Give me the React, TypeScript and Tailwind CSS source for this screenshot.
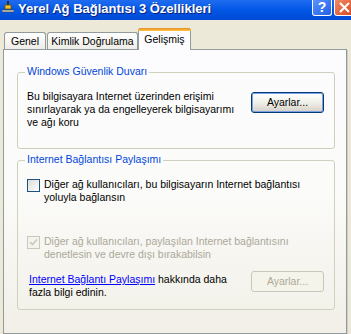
const XpButton = ({ label, disabled }: { label: string; disabled?: boolean }) => {
  if (disabled) {
    return (
      <div className="flex h-[21px] w-[73px] shrink-0 items-center justify-center rounded-[3px] border border-[#c9c7ba] bg-[#f5f4ea] text-[#aca899]">
        {label}
      </div>
    );
  }
  return (
    <div className="flex h-[21px] w-[73px] shrink-0 items-center justify-center rounded-[3px] border border-[#003c74] bg-gradient-to-b from-[#ffffff] via-[#f0f0ea] to-[#d6d0c5] text-black shadow-[inset_0_0_0_1px_#7ba0e4]">
      {label}
    </div>
  );
};

const GroupBox = ({ title, children, className }: { title: string; children: React.ReactNode; className?: string }) => (
  <div className={`relative rounded-[3px] border border-[#d0d0bf] ${className ?? ''}`}>
    <span className="absolute -top-[8px] left-[7px] bg-[#fcfcfe] px-[2px] leading-[13px] text-[#0046d5]">
      {title}
    </span>
    {children}
  </div>
);

const Checkbox = ({ checked, disabled }: { checked?: boolean; disabled?: boolean }) => (
  <div
    className={`flex h-[13px] w-[13px] shrink-0 items-center justify-center border ${
      disabled ? 'border-[#cac8bb] bg-[#f4f3ee]' : 'border-[#1c5180] bg-gradient-to-br from-[#dcdcd7] to-[#ffffff]'
    }`}
  >
    {checked && (
      <svg width="9" height="9" viewBox="0 0 9 9">
        <path d="M1 4 L3.5 6.5 L8 1.5" fill="none" stroke={disabled ? '#cac8bb' : '#21a121'} strokeWidth="1.6" />
      </svg>
    )}
  </div>
);

const App = () => {
  return (
    <div className="flex h-[334px] w-[351px] flex-col overflow-hidden bg-[#ece9d8] font-['Liberation_Sans',Arial,sans-serif] text-[10.5px]">
      {/* title bar */}
      <div className="flex h-[20px] shrink-0 items-start bg-gradient-to-b from-[#1f6cf0] via-[#0057e6] to-[#0049d4]">
        <svg className="ml-[2px] mt-[1px]" width="12" height="12" viewBox="0 0 12 12">
          <rect x="5" y="0" width="2" height="8" fill="#2b2b2b" />
          <rect x="3" y="4" width="6" height="4" fill="#f4c430" stroke="#6b5200" strokeWidth="0.8" />
          <rect x="0" y="9" width="12" height="2" fill="#d8d8d8" stroke="#3a3a3a" strokeWidth="0.6" />
        </svg>
        <span className="ml-[4px] mt-[1px] text-[13px] font-bold leading-[15px] text-white [text-shadow:1px_1px_0_#0a1e7a]">
          Yerel Ağ Bağlantısı 3 Özellikleri
        </span>
        <div className="ml-auto flex gap-[2px]">
          <div className="flex h-[16px] w-[20px] items-end justify-center rounded-b-[3px] border border-t-0 border-white bg-gradient-to-br from-[#5b92ff] to-[#1f5fe6] pb-[1px]">
            <span className="text-[14px] font-bold leading-[14px] text-white">?</span>
          </div>
          <div className="-mr-[4px] flex h-[16px] w-[21px] items-end justify-center rounded-b-[3px] border border-t-0 border-white bg-gradient-to-br from-[#f08a64] to-[#d2451c] pb-[2px]">
            <svg width="11" height="11" viewBox="0 0 11 11">
              <path d="M1 1 L10 10 M10 1 L1 10" stroke="white" strokeWidth="2" />
            </svg>
          </div>
        </div>
      </div>

      {/* body */}
      <div className="flex flex-1 flex-col pl-[3px] pr-[4px] pt-[8px]">
        {/* tabs */}
        <div className="-mb-[1px] flex items-end pl-[1px] text-black">
          <div className="flex h-[18px] w-[42px] items-center justify-center rounded-t-[3px] border border-b-0 border-[#919b9c] bg-gradient-to-b from-[#ffffff] to-[#ecebe5]">
            Genel
          </div>
          <div className="ml-[1px] flex h-[18px] w-[91px] items-center justify-center rounded-t-[3px] border border-b-0 border-[#919b9c] bg-gradient-to-b from-[#ffffff] to-[#ecebe5]">
            Kimlik Doğrulama
          </div>
          <div className="relative z-10 -mr-[1px] flex h-[22px] w-[53px] flex-col rounded-t-[3px] border border-b-0 border-[#919b9c] bg-[#fcfcfe]">
            <div className="-mx-[1px] -mt-[1px] h-[3px] rounded-t-[3px] bg-gradient-to-b from-[#e68b2c] to-[#ffc73c]" />
            <div className="flex flex-1 items-center justify-center pb-[1px]">Gelişmiş</div>
          </div>
        </div>

        {/* panel */}
        <div className="flex flex-1 flex-col border border-[#919b9c] bg-gradient-to-b from-[#fcfcfe] via-[#fbfbf9] to-[#f1efe7] pl-[13px] pr-[11px] pt-[22px] shadow-[1px_1px_0_#d0cfc6]">
          <GroupBox title="Windows Güvenlik Duvarı" className="h-[77px]">
            <div className="flex items-start pl-[9px] pr-[10px] pt-[17px] leading-[13px] text-black">
              <p>
                Bu bilgisayara Internet üzerinden erişimi
                <br />
                sınırlayarak ya da engelleyerek bilgisayarımı
                <br />
                ve ağı koru
              </p>
              <div className="ml-auto mt-[2px]">
                <XpButton label="Ayarlar..." />
              </div>
            </div>
          </GroupBox>

          <GroupBox title="Internet Bağlantısı Paylaşımı" className="mt-[11px] h-[150px]">
            <div className="flex flex-col pl-[9px] pr-[10px] pt-[18px] leading-[13px]">
              <div className="flex items-start gap-[4px] text-black">
                <Checkbox />
                <p className="-mt-[1px]">
                  Diğer ağ kullanıcıları, bu bilgisayarın Internet bağlantısı
                  <br />
                  yoluyla bağlansın
                </p>
              </div>
              <div className="mt-[32px] flex items-start gap-[4px] text-[#aca899]">
                <Checkbox checked disabled />
                <p className="-mt-[1px]">
                  Diğer ağ kullanıcıları, paylaşılan Internet bağlantısını
                  <br />
                  denetlesin ve devre dışı bırakabilsin
                </p>
              </div>
              <div className="mt-[10px] flex items-start">
                <p className="pl-[2px] pt-[2px] text-black">
                  <span className="text-[#0000ff] underline">Internet Bağlantı Paylaşımı</span> hakkında daha
                  <br />
                  fazla bilgi edinin.
                </p>
                <div className="ml-auto">
                  <XpButton label="Ayarlar..." disabled />
                </div>
              </div>
            </div>
          </GroupBox>
        </div>
      </div>
    </div>
  );
};

export default App;
